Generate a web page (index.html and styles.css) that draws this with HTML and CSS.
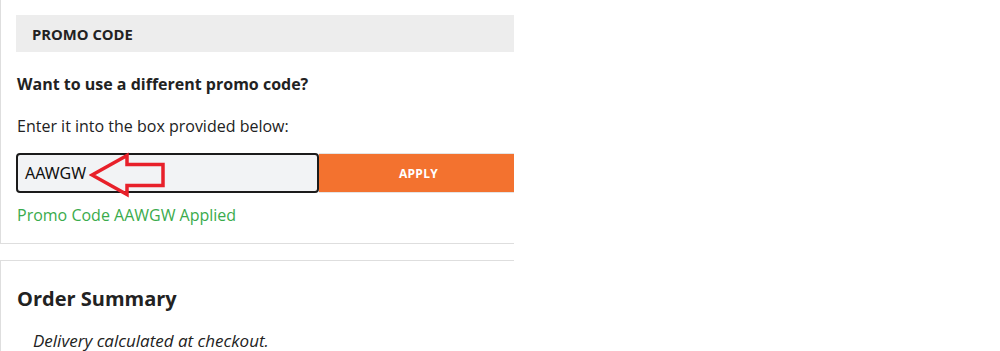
FILE: index.html
```html
<!DOCTYPE html>
<html lang="en">
<head>
    <meta charset="UTF-8">
    <title>Promo code</title>
    <link rel="stylesheet" href="styles.css">
</head>
<body>

    <div class="column">
        <div class="card promo-card">
            <div class="promo-head">PROMO CODE</div>
            <h3 class="promo-title">Want to use a different promo code?</h3>
            <p class="promo-hint">Enter it into the box provided below:</p>

            <div class="promo-form">
                <div class="promo-input">
                    <span class="code">AAWGW</span>
                    <!-- annotation arrow pointing at the code -->
                    <svg class="arrow" width="80" height="46" viewBox="0 0 80 46">
                        <path d="M3 23 L38 3.5 L38 12.5 L74 12.5 L74 33.5 L38 33.5 L38 42.5 Z"
                              fill="none" stroke="#e8202a" stroke-width="3.5" stroke-linejoin="miter"/>
                    </svg>
                </div>
                <button class="apply-btn">APPLY</button>
            </div>

            <p class="promo-ok">Promo Code AAWGW Applied</p>
        </div>

        <div class="card summary-card">
            <h2>Order Summary</h2>
            <p class="delivery">Delivery calculated at checkout.</p>
        </div>
    </div>

</body>
</html>
```

FILE: styles.css
```css
body {
    margin: 0;
    font-family: 'Open Sans', 'Noto Sans', sans-serif;
    color: #222;
    background: #fff;
    overflow: hidden;
}

.column {
    width: 514px;
    display: flex;
    flex-direction: column;
    gap: 16px;
}

.card {
    border-left: 1px solid #dedede;
    border-bottom: 1px solid #dedede;
}

/* Promo code */
.promo-card {
    padding: 15px 0 17px 15px;
}

.promo-head {
    background: #ededed;
    height: 37px;
    display: flex;
    align-items: center;
    padding-left: 16px;
    font-size: 14.8px;
    font-weight: 700;
}

.promo-title {
    margin: 21px 0 0 1px;
    font-size: 16px;
    font-weight: 700;
    line-height: 22px;
}

.promo-hint {
    margin: 20px 0 0 1px;
    font-size: 16px;
    line-height: 22px;
}

.promo-form {
    display: flex;
    margin-top: 16px;
    height: 40px;
}

.promo-input {
    position: relative;
    width: 303px;
    box-sizing: border-box;
    background: #f2f3f5;
    border: 2px solid #1b1b1b;
    border-radius: 4px;
    display: flex;
    align-items: center;
    padding-left: 7px;
}

.promo-input .code {
    font-family: 'Noto Sans', sans-serif;
    font-size: 16px;
    color: #111;
}

.arrow {
    position: absolute;
    left: 71px;
    top: -3px;
}

.apply-btn {
    flex: 1;
    border: none;
    border-top: 1px solid #e4e4e4;
    border-bottom: 1px solid #e4e4e4;
    background: #f3722f;
    color: #fff;
    font-family: 'Open Sans', sans-serif;
    font-size: 12px;
    font-weight: 700;
    letter-spacing: 0.3px;
    padding: 0 0 0 4px;
}

.promo-ok {
    margin: 11px 0 0 1px;
    font-size: 16px;
    line-height: 22px;
    color: #3aab4c;
}

/* Order summary */
.summary-card {
    border-top: 1px solid #dedede;
    border-bottom: none;
    padding: 24px 0 0 16px;
}

.summary-card h2 {
    margin: 0;
    font-size: 20px;
    font-weight: 700;
    line-height: 28px;
}

.delivery {
    margin: 17px 0 0 16px;
    font-size: 17px;
    font-style: italic;
    line-height: 22px;
}
```
